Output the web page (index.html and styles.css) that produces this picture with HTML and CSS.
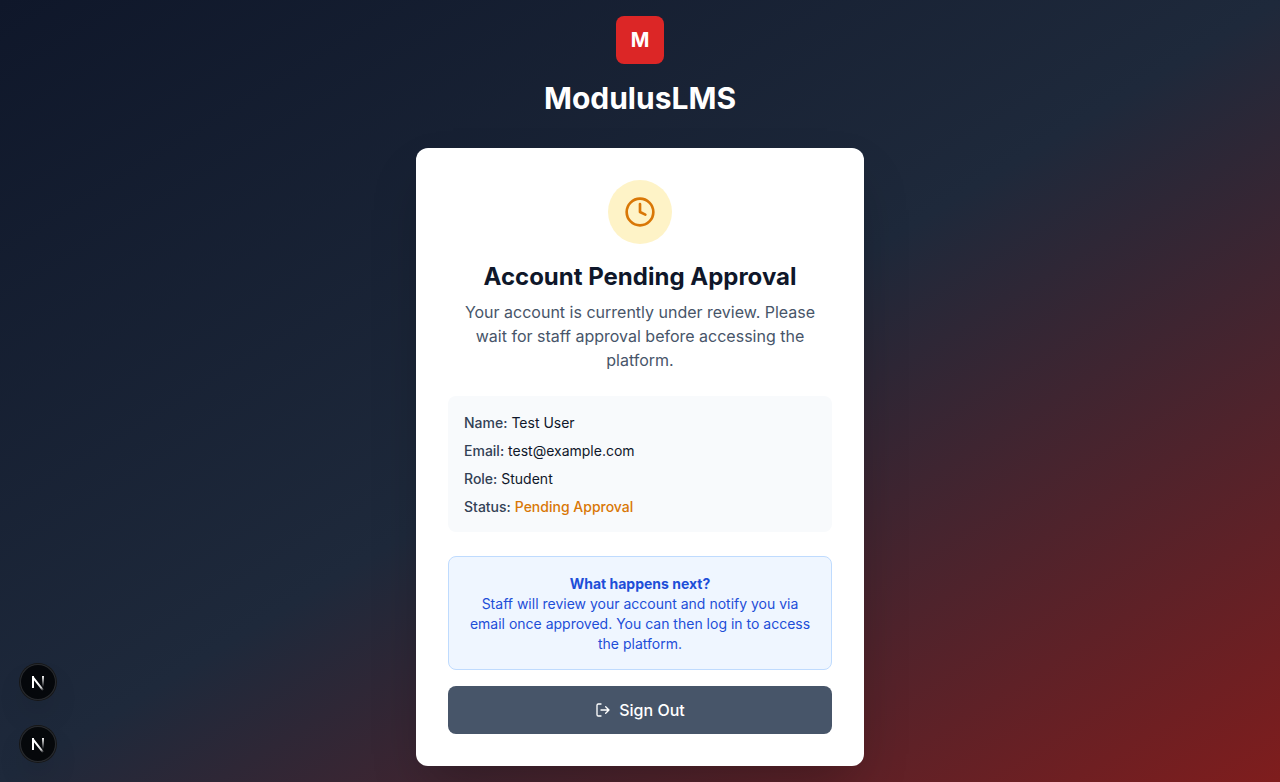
FILE: index.html
```html
<!DOCTYPE html>
<html lang="en">
<head>
<meta charset="utf-8">
<title>ModulusLMS</title>
<link rel="stylesheet" href="styles.css">
</head>
<body>
<main class="page">
  <div class="container">
    <header class="brand">
      <div class="logo">M</div>
      <h1 class="brand-name">ModulusLMS</h1>
    </header>
    <section class="card">
      <div class="intro">
        <div class="status-icon">
          <svg width="32" height="32" viewBox="0 0 24 24" fill="none" stroke="currentColor" stroke-width="2" stroke-linecap="round" stroke-linejoin="round"><circle cx="12" cy="12" r="10"/><path d="M12 6v6l4 2"/></svg>
        </div>
        <h2 class="title">Account Pending Approval</h2>
        <p class="lead">Your account is currently under review. Please wait for staff approval before accessing the platform.</p>
      </div>
      <div class="details">
        <p><strong>Name:</strong> Test User</p>
        <p><strong>Email:</strong> test@example.com</p>
        <p><strong>Role:</strong> Student</p>
        <p><strong>Status:</strong> <span class="pending">Pending Approval</span></p>
      </div>
      <div class="notice">
        <strong>What happens next?</strong><br>
        Staff will review your account and notify you via email once approved. You can then log in to access the platform.
      </div>
      <button class="sign-out">
        <svg width="16" height="16" viewBox="0 0 24 24" fill="none" stroke="currentColor" stroke-width="2" stroke-linecap="round" stroke-linejoin="round"><path d="M9 21H5a2 2 0 0 1-2-2V5a2 2 0 0 1 2-2h4M16 17l5-5-5-5M21 12H9"/></svg>
        Sign Out
      </button>
    </section>
  </div>
</main>
<div class="dev-tools">
  <div class="dev-badge">
    <svg width="40" height="40" viewBox="0 0 40 40" fill="none"><defs><linearGradient id="stem" x1="21" y1="21" x2="26" y2="28" gradientUnits="userSpaceOnUse"><stop stop-color="#fff"/><stop offset=".6" stop-color="#fff" stop-opacity=".8"/><stop offset="1" stop-color="#fff" stop-opacity="0"/></linearGradient><linearGradient id="bar" x1="25" y1="14" x2="25" y2="25" gradientUnits="userSpaceOnUse"><stop stop-color="#fff"/><stop offset="1" stop-color="#fff" stop-opacity="0"/></linearGradient></defs><path d="M15 26V15.4L25.2 28.4" stroke="url(#stem)" stroke-width="2" stroke-linejoin="bevel"/><path d="M15 14v3" stroke="#fff" stroke-width="2"/><path d="M25 14v11" stroke="url(#bar)" stroke-width="1.9"/></svg>
  </div>
  <div class="dev-badge">
    <svg width="40" height="40" viewBox="0 0 40 40" fill="none"><path d="M15 26V15.4L25.2 28.4" stroke="url(#stem)" stroke-width="2" stroke-linejoin="bevel"/><path d="M15 14v3" stroke="#fff" stroke-width="2"/><path d="M25 14v11" stroke="url(#bar)" stroke-width="1.9"/></svg>
  </div>
</div>
</body>
</html>
```
FILE: styles.css
```css
* { box-sizing: border-box; margin: 0; padding: 0; }
body { font-family: Inter, sans-serif; line-height: 1.5; color: #0f172a; overflow: hidden; }
.page { min-height: 782px; display: flex; align-items: center; justify-content: center; padding: 16px; background: linear-gradient(to bottom right, #0f172a, #1e293b, #7f1d1d); }
.container { width: 448px; }
.brand { display: flex; flex-direction: column; align-items: center; margin-bottom: 32px; }
.logo { display: flex; align-items: center; justify-content: center; width: 48px; height: 48px; margin-bottom: 16px; border-radius: 8px; background: #dc2626; color: #fff; font-size: 20px; font-weight: 700; }
.brand-name { color: #fff; font-size: 30px; line-height: 36px; font-weight: 700; }
.card { padding: 32px; border-radius: 12px; background: #fff; box-shadow: 0 25px 50px -12px rgb(0 0 0 / .25); }
.intro { display: flex; flex-direction: column; align-items: center; text-align: center; margin-bottom: 24px; }
.status-icon { display: flex; align-items: center; justify-content: center; width: 64px; height: 64px; margin-bottom: 17px; border-radius: 50%; background: #fef3c7; color: #d97706; }
.title { margin-bottom: 7px; font-size: 24px; line-height: 32px; font-weight: 700; }
.lead { color: #475569; }
.details { display: flex; flex-direction: column; gap: 8px; margin-bottom: 24px; padding: 17px 16px 15px; border-radius: 8px; background: #f8fafc; font-size: 14px; line-height: 20px; }
.details strong { color: #334155; font-weight: 500; }
.details .pending { color: #d97706; font-weight: 500; }
.notice { margin-bottom: 16px; padding: 17px 16px 15px; border: 1px solid #bfdbfe; border-radius: 8px; background: #eff6ff; color: #1d4ed8; font-size: 14px; line-height: 20px; text-align: center; }
.notice strong { font-weight: 700; }
.sign-out { display: flex; align-items: center; justify-content: center; gap: 8px; width: 100%; height: 48px; border: 0; border-radius: 8px; background: #475569; color: #fff; font: 500 16px/24px Inter, sans-serif; }
.dev-tools { position: fixed; left: 20px; bottom: 20px; display: flex; flex-direction: column; gap: 26px; }
.dev-badge { width: 36px; height: 36px; display: flex; align-items: center; justify-content: center; border-radius: 50%; background: rgb(0 0 0 / .8); box-shadow: 0 0 0 1px #171717, inset 0 0 0 1px rgb(255 255 255 / .14), 0 16px 32px -8px rgb(0 0 0 / .24); }
.dev-badge svg { flex: none; }
```
